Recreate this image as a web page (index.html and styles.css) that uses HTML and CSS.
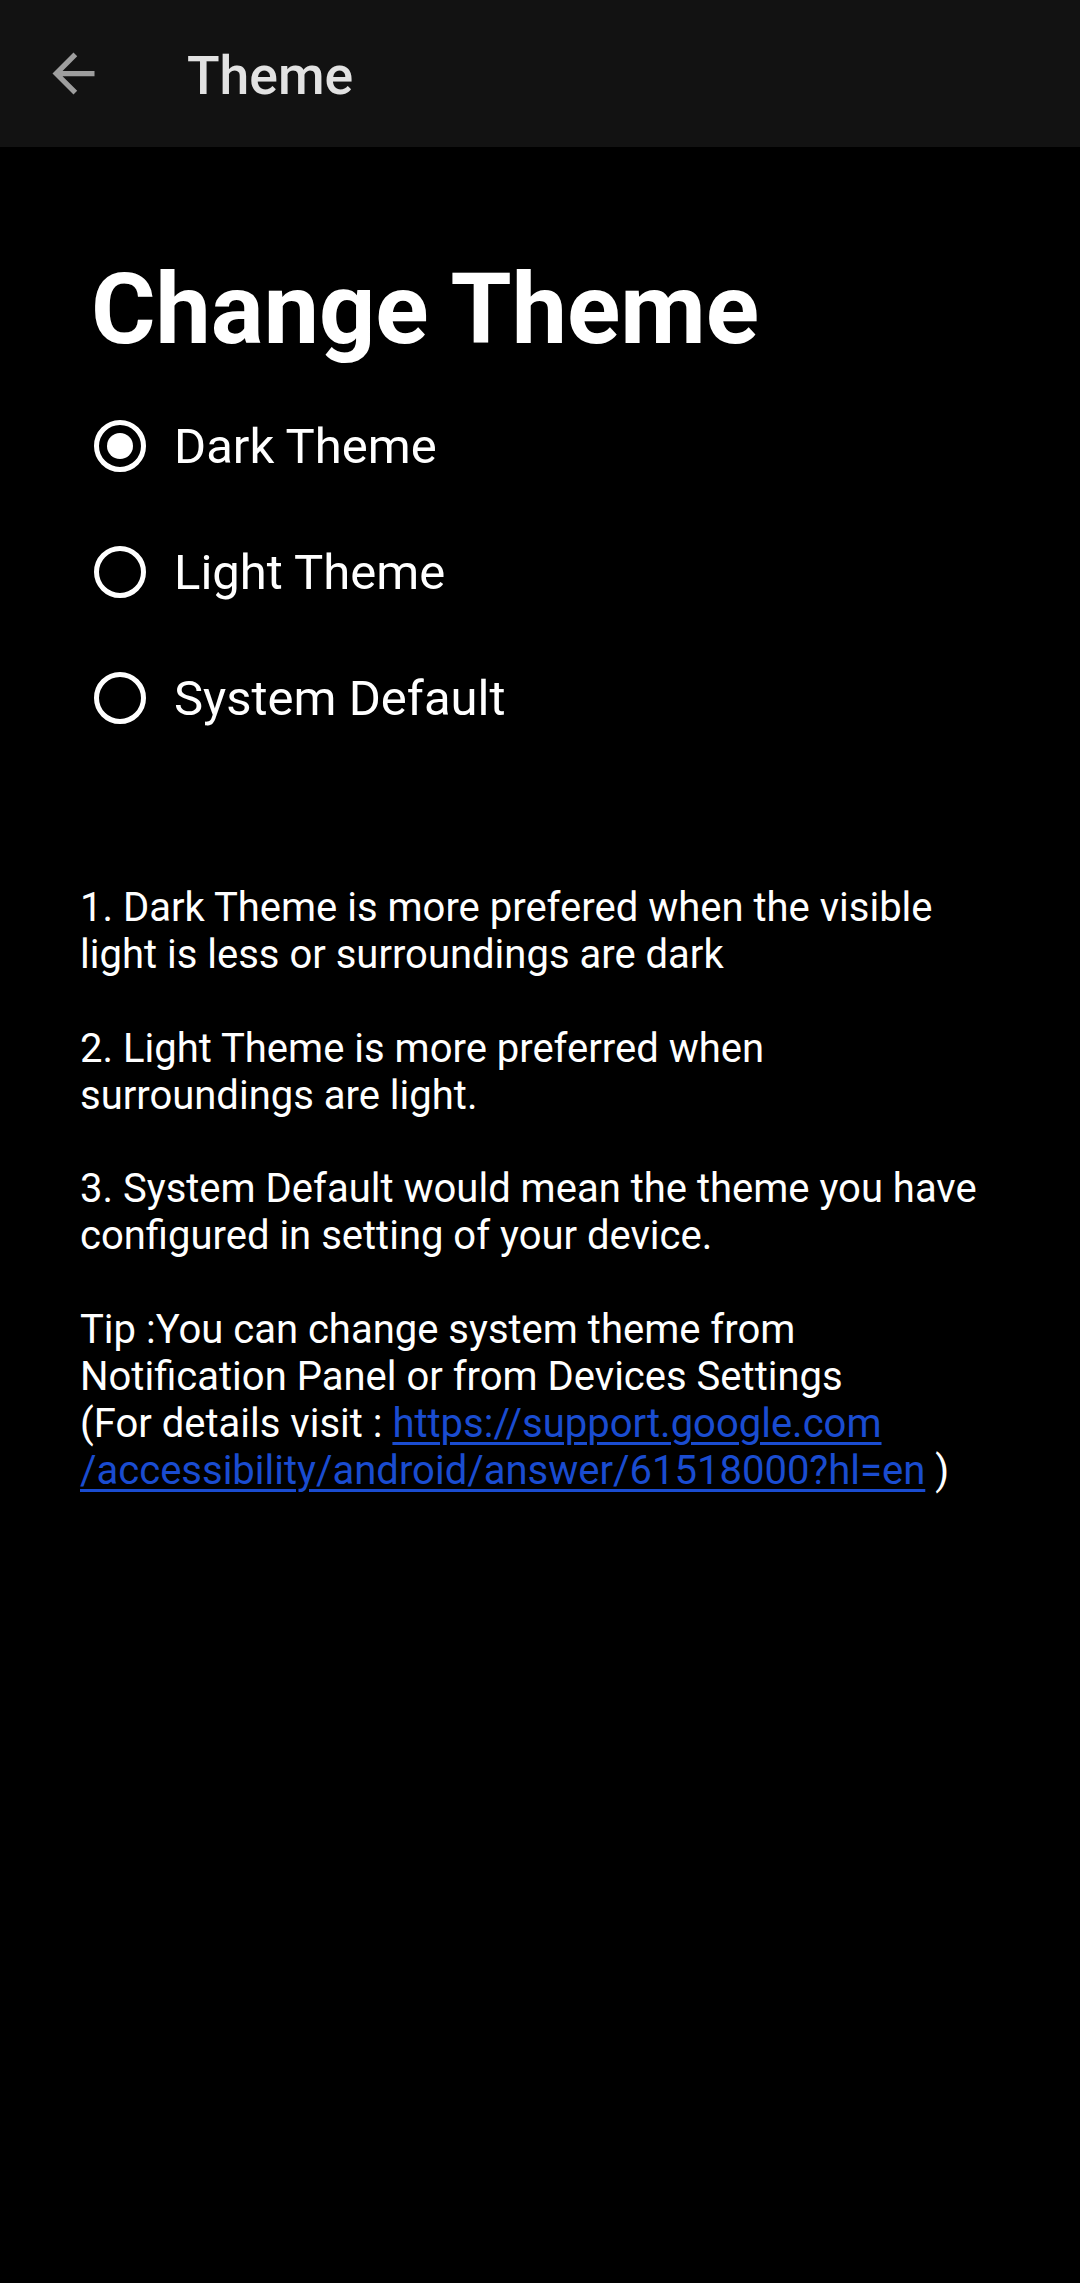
FILE: index.html
```html
<!DOCTYPE html>
<html lang="en">
<head>
<meta charset="utf-8">
<title>Theme</title>
<link rel="stylesheet" href="styles.css">
</head>
<body>
<header class="appbar">
  <div class="back">
    <svg viewBox="0 0 24 24" width="63" height="63"><path d="M20 11H7.83l5.59-5.59L12 4l-8 8 8 8 1.41-1.41L7.83 13H20v-2z" fill="#9e9e9e"/></svg>
  </div>
  <div class="title">Theme</div>
</header>
<main class="content">
  <h1 class="heading">Change Theme</h1>
  <div class="options">
    <div class="option">
      <span class="radio checked"><span class="dot"></span></span>
      <span class="label">Dark Theme</span>
    </div>
    <div class="option">
      <span class="radio"></span>
      <span class="label">Light Theme</span>
    </div>
    <div class="option">
      <span class="radio"></span>
      <span class="label">System Default</span>
    </div>
  </div>
  <div class="info">
    <p>1. Dark Theme is more prefered when the visible<br>light is less or surroundings are dark</p>
    <p>2. Light Theme is more preferred when<br>surroundings are light.</p>
    <p>3. System Default would mean the theme you have<br>configured in setting of your device.</p>
    <p>Tip :You can change system theme from<br>Notification Panel or from Devices Settings<br>(For details visit : <a class="link" href="#">https://support.google.com<br>/accessibility/android/answer/61518000?hl=en</a> )</p>
  </div>
</main>
</body>
</html>
```
FILE: styles.css
```css
html, body {
  margin: 0;
  padding: 0;
  background: #000;
}
body {
  font-family: Roboto, "Noto Sans", sans-serif;
  color: #fff;
  width: 1080px;
  min-height: 2283px;
}
.appbar {
  height: 147px;
  background: #121212;
  display: flex;
  align-items: center;
}
.back {
  width: 63px;
  height: 63px;
  margin-left: 42px;
  display: flex;
}
.title {
  margin-left: 82px;
  font-size: 53.5px;
  font-weight: 500;
  color: #e2e2e2;
  padding-top: 4px;
}
.content {
  padding: 0 80px;
}
.heading {
  margin: 104px 0 0 11px;
  font-size: 98.7px;
  font-weight: 700;
  line-height: normal;
}
.options {
  display: flex;
  flex-direction: column;
  margin-top: 16px;
  padding-left: 14px;
}
.option {
  height: 126px;
  display: flex;
  align-items: center;
}
.radio {
  width: 52px;
  height: 52px;
  box-sizing: border-box;
  border: 5.5px solid #fff;
  border-radius: 50%;
  display: flex;
  align-items: center;
  justify-content: center;
}
.dot {
  width: 26px;
  height: 26px;
  border-radius: 50%;
  background: #fff;
}
.label {
  margin-left: 28px;
  font-size: 49px;
  line-height: normal;
}
.info {
  margin-top: 124px;
  font-size: 40px;
  line-height: 46.9px;
}
.info p {
  margin: 0 0 46.9px 0;
}
.link {
  color: #1a4cd0;
  text-decoration: underline;
  text-decoration-thickness: 3px;
  text-underline-offset: 5px;
}
```
